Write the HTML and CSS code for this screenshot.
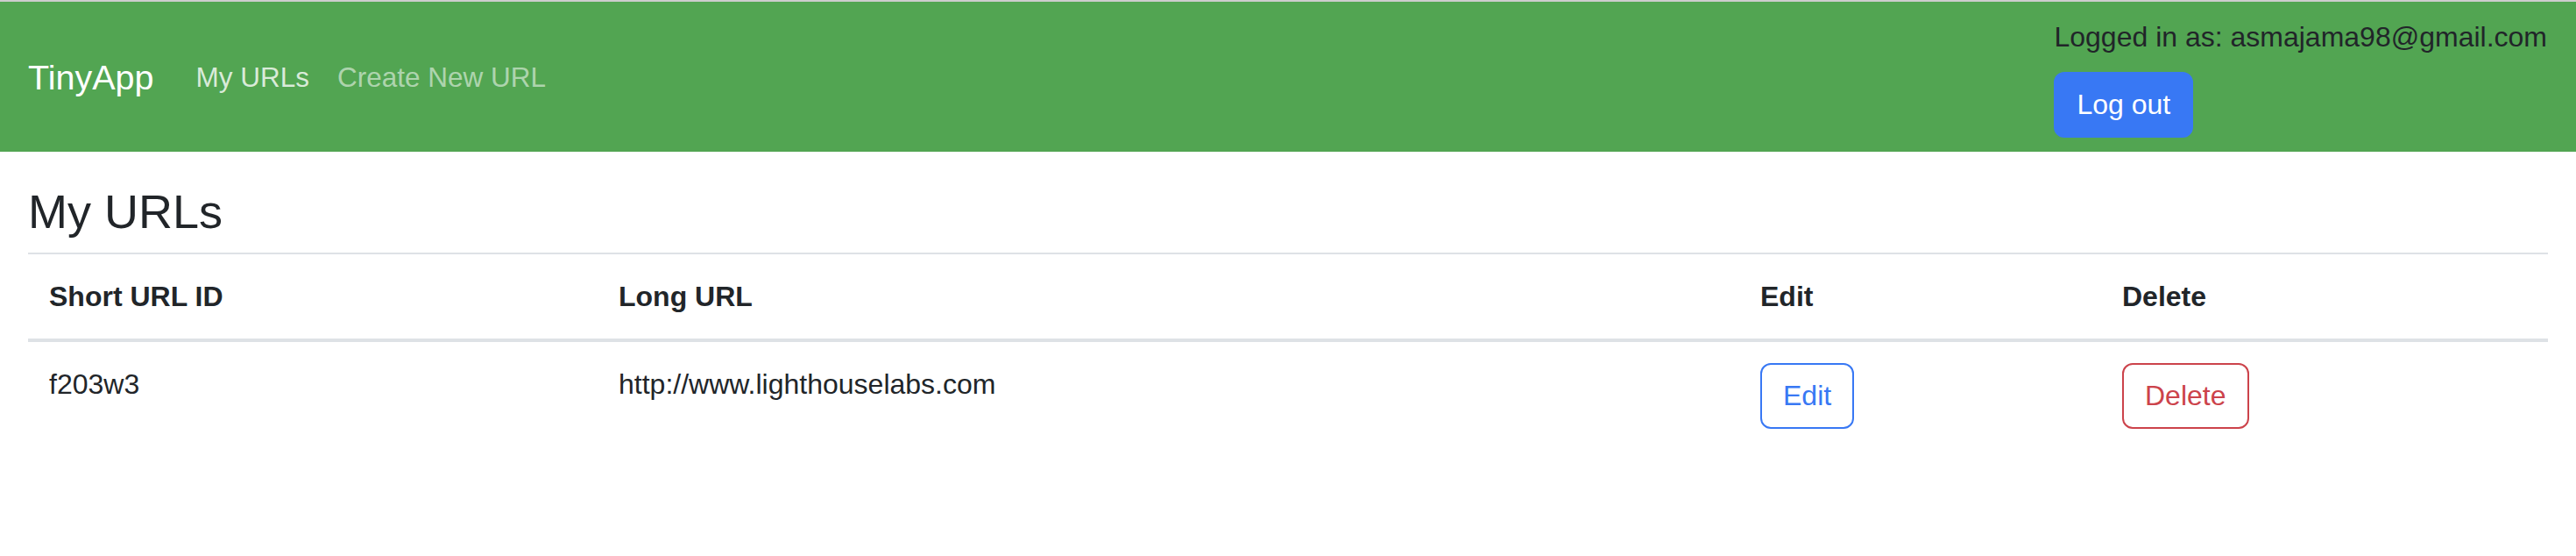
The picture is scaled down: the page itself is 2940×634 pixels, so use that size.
FILE: index.html
```html
<!DOCTYPE html>
<html lang="en">
<head>
<meta charset="utf-8">
<title>TinyApp</title>
<link rel="stylesheet" href="styles.css">
</head>
<body>
<nav class="navbar">
  <div class="nav-left">
    <a class="brand" href="#">TinyApp</a>
    <a class="nav-link active" href="#">My URLs</a>
    <a class="nav-link" href="#">Create New URL</a>
  </div>
  <div class="nav-right">
    <span class="login-text">Logged in as: asmajama98@gmail.com</span>
    <button class="btn btn-primary" type="button">Log out</button>
  </div>
</nav>
<main class="container">
  <h3 class="title">My URLs</h3>
  <table class="url-table">
    <colgroup>
      <col class="c1"><col class="c2"><col class="c3"><col class="c4">
    </colgroup>
    <thead>
      <tr>
        <th>Short URL ID</th>
        <th>Long URL</th>
        <th>Edit</th>
        <th>Delete</th>
      </tr>
    </thead>
    <tbody>
      <tr>
        <td>f203w3</td>
        <td>http://www.lighthouselabs.com</td>
        <td><button class="btn btn-outline-primary" type="button">Edit</button></td>
        <td><button class="btn btn-outline-danger" type="button">Delete</button></td>
      </tr>
    </tbody>
  </table>
</main>
</body>
</html>
```
FILE: styles.css
```css
html, body {
  margin: 0;
  padding: 0;
  background: #ffffff;
}
body {
  font-family: "Liberation Sans", Arial, sans-serif;
  font-size: 32px;
  line-height: 48px;
  color: #212529;
  border-top: 2px solid #cdcdcd;
}
.navbar {
  display: flex;
  justify-content: space-between;
  align-items: center;
  background: #52a552;
  padding: 16px 32px 16px 32px;
}
.nav-left {
  display: flex;
  align-items: center;
}
.brand {
  color: #ffffff;
  text-decoration: none;
  font-size: 39.5px;
  line-height: 60px;
  margin-right: 32px;
}
.nav-link {
  color: rgba(255, 255, 255, 0.55);
  text-decoration: none;
  padding: 0 16px;
  font-size: 31.5px;
}
.nav-link.active {
  color: rgba(255, 255, 255, 0.78);
}
.nav-right {
  display: flex;
  flex-direction: column;
  align-items: flex-start;
  margin-right: 1px;
}
.login-text {
  color: #212529;
  margin-bottom: 16px;
}
.btn {
  display: inline-block;
  font-family: inherit;
  font-size: 32px;
  line-height: 47px;
  padding: 12px 24px;
  border: 2px solid transparent;
  border-radius: 12px;
  background: transparent;
  cursor: pointer;
}
.btn-primary {
  background: #3878f4;
  border-color: #3878f4;
  color: #ffffff;
}
.btn-outline-primary {
  color: #3878f4;
  border-color: #3878f4;
}
.btn-outline-danger {
  color: #cc434b;
  border-color: #cc434b;
}
.container {
  padding: 0 32px;
}
.title {
  font-size: 54px;
  font-weight: 500;
  line-height: 65px;
  margin: 36px 0 14px 0;
}
.url-table {
  width: 100%;
  border-collapse: collapse;
  table-layout: fixed;
}
.c1 { width: 650px; }
.c2 { width: 1303px; }
.c3 { width: 413px; }
.c4 { width: auto; }
.url-table th {
  text-align: left;
  font-weight: 700;
  padding: 24px;
  border-top: 2px solid #dee2e6;
  border-bottom: 4px solid #dee2e6;
  vertical-align: top;
}
.url-table td {
  padding: 24px;
  vertical-align: top;
}
```
